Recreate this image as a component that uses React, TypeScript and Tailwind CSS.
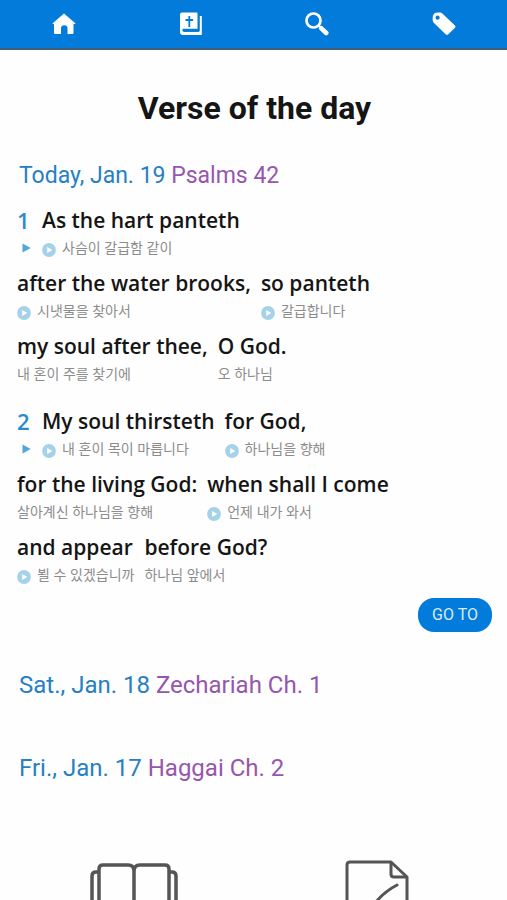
import { ReactNode } from "react";

interface Phrase {
  text: string;
  meaning: string;
  audio?: boolean;
}

interface Verse {
  number: number;
  phrases: Phrase[];
}

interface NavItem {
  title: string;
  href: string;
  icon: ReactNode;
}

const verses: Verse[] = [
  {
    number: 1,
    phrases: [
      { text: "As the hart panteth", meaning: "사슴이 갈급함 같이", audio: true },
      { text: "after the water brooks,", meaning: "시냇물을 찾아서", audio: true },
      { text: "so panteth", meaning: "갈급합니다", audio: true },
      { text: "my soul after thee,", meaning: "내 혼이 주를 찾기에" },
      { text: "O God.", meaning: "오 하나님" },
    ],
  },
  {
    number: 2,
    phrases: [
      { text: "My soul thirsteth", meaning: "내 혼이 목이 마릅니다", audio: true },
      { text: "for God,", meaning: "하나님을 향해", audio: true },
      { text: "for the living God:", meaning: "살아계신 하나님을 향해" },
      { text: "when shall I come", meaning: "언제 내가 와서", audio: true },
      { text: "and appear", meaning: "뵐 수 있겠습니까", audio: true },
      { text: "before God?", meaning: "하나님 앞에서" },
    ],
  },
];

const navItems: NavItem[] = [
  {
    title: "Home",
    href: "#home",
    icon: (
      <path
        fill="currentColor"
        d="M12 1.5 23.3 11.2q.5.6-.2.9H21.5V21q0 1-1 1h-5v-5.5a3 3 0 0 0-6.5 0V22H3q-1 0-1-1v-8.900H.9q-.7-.3-.2-.9Z"
      />
    ),
  },
  {
    title: "Bible",
    href: "#bible",
    icon: (
      <>
        <path
          fill="currentColor"
          fillRule="evenodd"
          d="M3 .5h14.500q1 0 1 1v15.300H4.500a1 1 0 0 0 0 2.400H20.800V4H22.800V23H4Q1 23 1 20V2.500Q1 .5 3 .5Z"
        />
        <path stroke="#037bda" strokeWidth="1.800" d="M10.300 4v11M6.500 8h7.600" />
        <path stroke="#037bda" strokeWidth="1.500" d="M4.300 19.200H20" />
      </>
    ),
  },
  {
    title: "Search",
    href: "#search",
    icon: (
      <>
        <circle cx="8.500" cy="8.500" r="7" stroke="currentColor" strokeWidth="2.700" />
        <path stroke="currentColor" strokeWidth="2" d="m13 13 2.500 2.500" />
        <path
          stroke="currentColor"
          strokeWidth="4.600"
          strokeLinecap="round"
          d="m16.300 16.300 4.900 4.700"
        />
      </>
    ),
  },
  {
    title: "Tags",
    href: "#tags",
    icon: (
      <path
        fill="currentColor"
        fillRule="evenodd"
        d="M2 1.800Q3.500.3 8 .6q1.500.1 2.600 1.200L22.700 13.200q1.400 1.300.1 2.700l-6.500 6.400q-1.300 1.300-2.700 0L2 11Q.8 9.800.7 8.200.3 3.600 2 1.800ZM5.600 3.600a2.100 2.100 0 1 0 0 4.200 2.100 2.100 0 0 0 0-4.200Z"
      />
    ),
  },
];

const PlayDot = () => (
  <svg viewBox="0 0 14 14" className="mt-1 size-3.5 shrink-0" aria-hidden="true">
    <circle cx="7" cy="7" r="6.900" fill="#a5d1e9" />
    <path d="M5.200 3.900v6.200L10.300 7Z" fill="#fff" />
  </svg>
);

const Header = () => (
  <header className="border-b-2 border-[#405f7c] bg-[#037bda]">
    <nav className="grid h-12 grid-cols-4 pl-px">
      {navItems.map((item) => (
        <a
          key={item.title}
          href={item.href}
          aria-label={item.title}
          className="flex items-center justify-center text-white"
        >
          <svg viewBox="0 0 24 24" fill="none" className="size-6">
            {item.icon}
          </svg>
        </a>
      ))}
    </nav>
  </header>
);

const VerseText = ({ number, phrases }: Verse) => (
  <div className="flex flex-wrap gap-x-2.5 pr-3">
    <div className="w-[15px]">
      <div className="text-[22px] leading-8 font-semibold text-[#2a8bd0]">{number}</div>
      <button aria-label={`Play verse ${number}`} className="flex h-6 items-center pl-[5px]">
        <svg viewBox="0 0 9 10" className="h-2.5 w-[9px]">
          <path d="M.5.500v9L8.700 5Z" fill="#4fa9d4" />
        </svg>
      </button>
    </div>
    {phrases.map((phrase) => (
      <div key={phrase.text} className="h-[63px]">
        <div className="text-[21px] leading-8 font-semibold">{phrase.text}</div>
        <div className="flex h-6 items-center gap-1.5 text-sm text-[#8c8c8c]">
          {phrase.audio && <PlayDot />}
          <span className="leading-6">{phrase.meaning}</span>
        </div>
      </div>
    ))}
  </div>
);

interface DayLinkProps {
  date: string;
  passage: string;
  today?: boolean;
}

const DayLink = ({ date, passage, today }: DayLinkProps) => (
  <h2 className={today ? "px-0.5 text-[23px] leading-8" : "px-0.5 text-2xl"}>
    <a href="#passage" className="text-[#2580c4]">
      {date} <span className="text-[#9656ae]">{passage}</span>
    </a>
  </h2>
);

const Shortcuts = () => (
  <div className="grid grid-cols-2 pr-2 pl-3 text-[#555]">
    <a href="#read" aria-label="Read" className="flex justify-center pt-[3px]">
      <svg viewBox="0 0 88 72" className="h-[72px] w-[88px]" fill="none" stroke="currentColor" strokeWidth="3.500">
        <path d="M44 67V8q0-6-6-6H13Q9 2 9 6v56h29q5 0 6 5 1-5 6-5h29V6q0-4-4-4H50q-6 0-6 6" />
        <path d="M9 9H6Q2 9 2 13v56h84V13q0-4-4-4h-3" />
      </svg>
    </a>
    <a href="#notes" aria-label="Notes" className="flex justify-center">
      <svg viewBox="0 0 64 76" className="h-[76px] w-16" fill="none" stroke="currentColor" strokeWidth="3">
        <path d="M46 2H5Q2 2 2 5v66q0 3 3 3h54q3 0 3-3V17Z" strokeLinejoin="round" />
        <path d="M46 3v11q0 3 3 3h12" />
        <path d="M52 25Q31 36 21 58" strokeLinecap="round" />
      </svg>
    </a>
  </div>
);

export default function App() {
  return (
    <div className="h-screen overflow-hidden bg-[#fefefe] font-['Roboto','Noto_Sans_CJK_KR',sans-serif] text-[#151515]">
      <Header />
      <main className="pr-[15px] pl-[17px]">
        <h1 className="pt-9 text-center text-[32px] leading-11 font-bold">Verse of the day</h1>
        <section className="pt-[30px]">
          <DayLink date="Today, Jan. 19" passage="Psalms 42" today />
          <div className="flex flex-col gap-3 pt-3 font-['Open_Sans','Noto_Sans_CJK_KR',sans-serif]">
            {verses.map((verse) => (
              <VerseText key={verse.number} {...verse} />
            ))}
          </div>
          <div className="flex justify-end pt-1">
            <button className="h-[34px] rounded-2xl bg-[#037bda] px-3.5 text-base text-[#dcebfa]">
              GO TO
            </button>
          </div>
        </section>
        <section className="flex flex-col gap-[51px] pt-[37px]">
          <DayLink date="Sat., Jan. 18" passage="Zechariah Ch. 1" />
          <DayLink date="Fri., Jan. 17" passage="Haggai Ch. 2" />
        </section>
      </main>
      <footer className="pt-[76px]">
        <Shortcuts />
      </footer>
    </div>
  );
}
